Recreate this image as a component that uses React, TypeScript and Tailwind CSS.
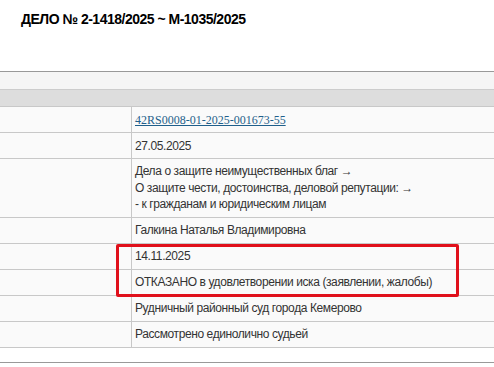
import React from 'react';

type Row = { lines: string[]; link?: boolean; tall?: boolean };

const rows: Row[] = [
  { lines: ['42RS0008-01-2025-001673-55'], link: true },
  { lines: ['27.05.2025'] },
  {
    lines: [
      'Дела о защите неимущественных благ →',
      'О защите чести, достоинства, деловой репутации: →',
      '- к гражданам и юридическим лицам',
    ],
    tall: true,
  },
  { lines: ['Галкина Наталья Владимировна'] },
  { lines: ['14.11.2025'] },
  { lines: ['ОТКАЗАНО в удовлетворении иска (заявлении, жалобы)'] },
  { lines: ['Рудничный районный суд города Кемерово'] },
  { lines: ['Рассмотрено единолично судьей'] },
];

export default function App() {
  return (
    <div className="relative h-[367px] w-[494px] overflow-hidden bg-white [font-family:'Liberation_Sans',Arial,sans-serif]">
      <div className="h-[71px] pl-[21px] pt-[11px] text-[14px] font-bold leading-[16px] tracking-[-0.5px] text-black">
        ДЕЛО № 2-1418/2025 ~ М-1035/2025
      </div>

      <div className="border-t border-[#999]">
        <div className="h-[18px] border-b border-[#ccc] bg-[#f5f5f5]" />
        <div className="h-[17px] border-b border-[#c8c8c8] bg-[#dddddd]" />
        {rows.map((row, i) => (
          <div key={i} className="flex border-b border-[#c8c8c8] bg-[#fafafa]">
            <div className="w-[132px] shrink-0 border-r border-[#c8c8c8]" />
            <div
              className={
                row.tall
                  ? 'flex flex-col justify-center py-[4px] pl-[3px] text-[12px] leading-[16.5px] tracking-[-0.4px] text-[#333]'
                  : 'flex h-[25px] items-center pl-[3px] text-[12px] leading-[16px] tracking-[-0.4px] text-[#333]'
              }
            >
              {row.lines.map((line) =>
                row.link ? (
                  <a
                    key={line}
                    href="#"
                    className="[font-family:'Liberation_Serif','Times_New_Roman',serif] text-[12px] tracking-normal text-[#1f5f8b] underline"
                  >
                    {line}
                  </a>
                ) : (
                  <div key={line}>{line}</div>
                ),
              )}
            </div>
          </div>
        ))}
        <div className="h-[15px] border-b border-[#999] bg-white" />
      </div>

      {/* highlight frame around the decision rows */}
      <div className="absolute left-[116px] top-[244px] h-[53px] w-[343px] rounded-[2px] border-[3px] border-[#e0101b]" />
    </div>
  );
}
